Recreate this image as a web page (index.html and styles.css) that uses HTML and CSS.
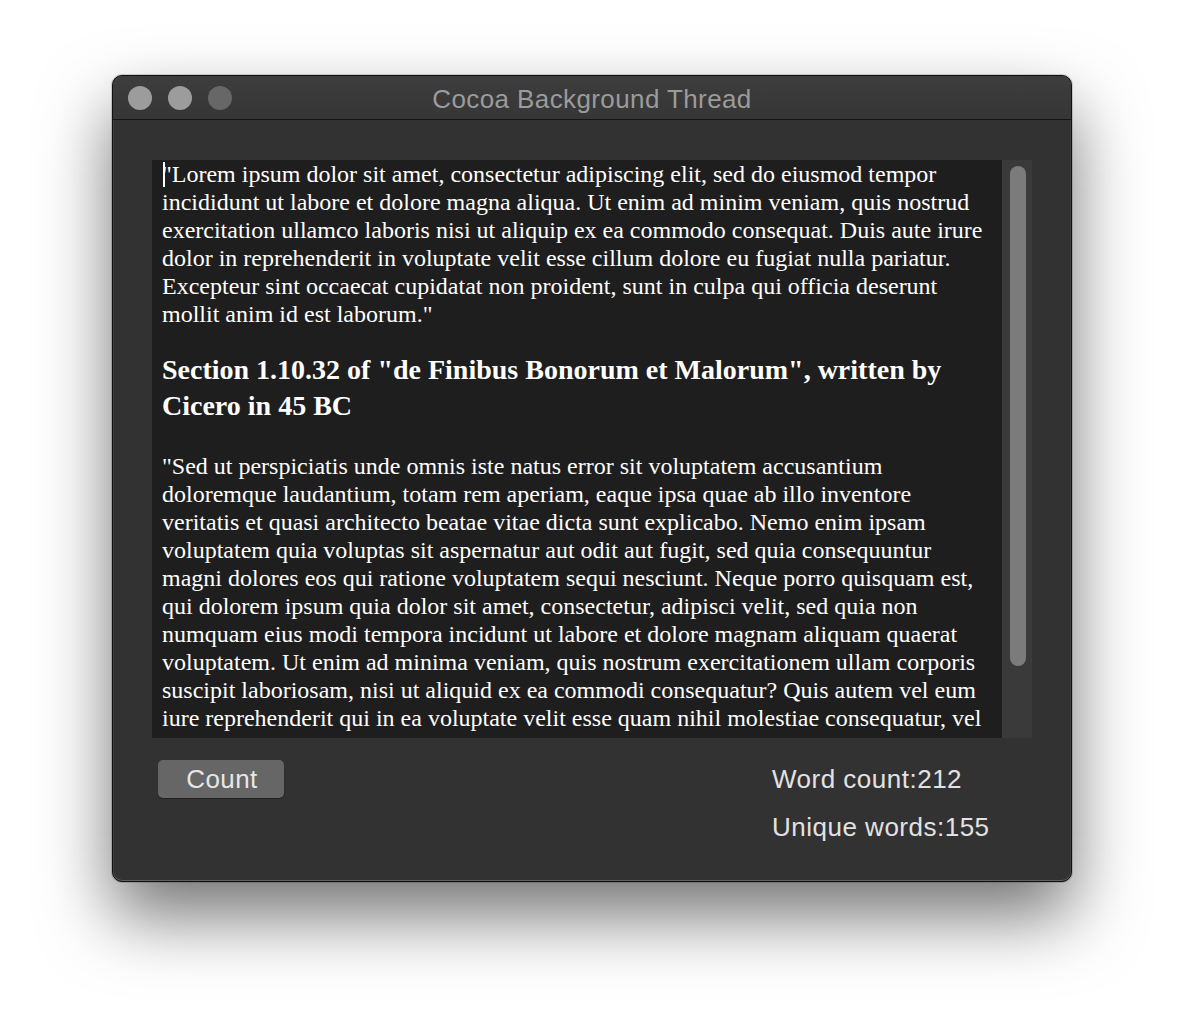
FILE: index.html
```html
<!DOCTYPE html>
<html>
<head>
<meta charset="utf-8">
<link rel="stylesheet" href="styles.css">
</head>
<body>
<div class="window">
  <div class="titlebar">
    <div class="lights">
      <span class="light"></span>
      <span class="light"></span>
      <span class="light dim"></span>
    </div>
    <div class="title">Cocoa Background Thread</div>
  </div>
  <div class="content">
    <div class="textview">
      <div class="text">
        <p class="para"><span class="caret"></span>"Lorem ipsum dolor sit amet, consectetur adipiscing elit, sed do eiusmod tempor incididunt ut labore et dolore magna aliqua. Ut enim ad minim veniam, quis nostrud exercitation ullamco laboris nisi ut aliquip ex ea commodo consequat. Duis aute irure dolor in reprehenderit in voluptate velit esse cillum dolore eu fugiat nulla pariatur. Excepteur sint occaecat cupidatat non proident, sunt in culpa qui officia deserunt mollit anim id est laborum."</p>
        <h2 class="heading">Section 1.10.32 of "de Finibus Bonorum et Malorum", written by Cicero in 45 BC</h2>
        <p class="para">"Sed ut perspiciatis unde omnis iste natus error sit voluptatem accusantium doloremque laudantium, totam rem aperiam, eaque ipsa quae ab illo inventore veritatis et quasi architecto beatae vitae dicta sunt explicabo. Nemo enim ipsam voluptatem quia voluptas sit aspernatur aut odit aut fugit, sed quia consequuntur magni dolores eos qui ratione voluptatem sequi nesciunt. Neque porro quisquam est, qui dolorem ipsum quia dolor sit amet, consectetur, adipisci velit, sed quia non numquam eius modi tempora incidunt ut labore et dolore magnam aliquam quaerat voluptatem. Ut enim ad minima veniam, quis nostrum exercitationem ullam corporis suscipit laboriosam, nisi ut aliquid ex ea commodi consequatur? Quis autem vel eum iure reprehenderit qui in ea voluptate velit esse quam nihil molestiae consequatur, vel illum qui dolorem eum fugiat quo voluptas nulla pariatur?"</p>
      </div>
      <div class="scroller"><div class="knob"></div></div>
    </div>
    <div class="bottom">
      <button class="count-btn">Count</button>
      <div class="stats">
        <div class="stat">Word count:212</div>
        <div class="stat">Unique words:155</div>
      </div>
    </div>
  </div>
</div>
</body>
</html>
```
FILE: styles.css
```css
html, body {
  margin: 0;
  padding: 0;
  background: #ffffff;
  width: 1184px;
  height: 1030px;
  overflow: hidden;
}
body {
  padding: 75px 0 0 112px;
  box-sizing: border-box;
}
.window {
  width: 960px;
  height: 807px;
  box-sizing: border-box;
  background: #323232;
  border: 1px solid #111111;
  border-radius: 10px;
  box-shadow: inset 0 -1px 0 #5e5e5e, inset 1px 0 0 #3e3e3e, inset -1px 0 0 #3e3e3e,
              0 34px 70px rgba(0,0,0,0.55), 0 0 0 1px rgba(0,0,0,0.15);
  overflow: hidden;
  display: flex;
  flex-direction: column;
}
.titlebar {
  position: relative;
  height: 43px;
  flex: none;
  background: linear-gradient(#3d3d3d, #363636);
  border-bottom: 1px solid #151515;
  display: flex;
  align-items: center;
  justify-content: center;
}
.lights {
  position: absolute;
  left: 15px;
  top: 10px;
  display: flex;
  gap: 16px;
}
.light {
  width: 24px;
  height: 24px;
  border-radius: 50%;
  background: #9c9c9c;
}
.light.dim {
  background: #676767;
}
.title {
  font-family: "Helvetica Neue", "Liberation Sans", Arial, sans-serif;
  font-size: 26px;
  letter-spacing: 0.4px;
  color: #9b9b9b;
  margin-top: 4px;
}
.content {
  flex: 1;
  padding: 40px 39px 0 39px;
  display: flex;
  flex-direction: column;
}
.textview {
  height: 578px;
  display: flex;
  background: #1e1e1e;
  flex: none;
}
.text {
  flex: 1;
  overflow: hidden;
  padding: 0 10px 0 10px;
  font-family: "Liberation Serif", "Times New Roman", serif;
  color: #ffffff;
}
.para {
  margin: 0;
  font-size: 24px;
  line-height: 28px;
}
.caret {
  display: inline-block;
  width: 2px;
  height: 25px;
  background: #ffffff;
  vertical-align: -5px;
  margin-right: -2px;
  position: relative;
  left: 1px;
}
.heading {
  margin: 24px 0 28px 0;
  font-size: 28px;
  line-height: 36px;
  font-weight: bold;
}
.scroller {
  width: 30px;
  flex: none;
  background: #3a3a3a;
  box-sizing: border-box;
  padding: 6px 6px 0 8px;
}
.knob {
  height: 500px;
  border-radius: 8px;
  background: #7b7b7b;
}
.bottom {
  display: flex;
  justify-content: space-between;
  padding: 22px 0 0 6px;
}
.count-btn {
  width: 126px;
  height: 38px;
  border: none;
  border-radius: 5px;
  background: #666666;
  box-shadow: 0 1px 1px rgba(0,0,0,0.35);
  color: #e6e6e6;
  font-family: "Helvetica Neue", "Liberation Sans", Arial, sans-serif;
  font-size: 26px;
  letter-spacing: 0.4px;
  padding: 0 0 0 2px;
  line-height: 38px;
}
.stats {
  width: 260px;
  display: flex;
  flex-direction: column;
  gap: 20px;
  padding-top: 5px;
}
.stat {
  font-family: "Helvetica Neue", "Liberation Sans", Arial, sans-serif;
  font-size: 26px;
  letter-spacing: 0.5px;
  line-height: 28px;
  color: #e2e2e2;
}
```
